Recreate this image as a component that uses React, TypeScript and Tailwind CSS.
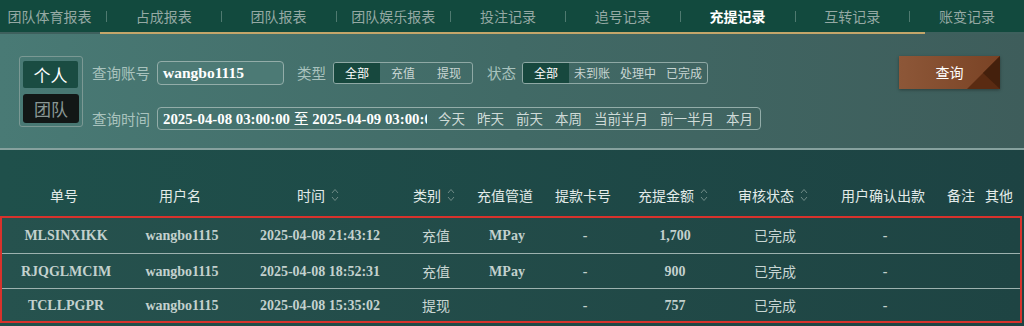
import React from "react";

const tabs = ["团队体育报表", "占成报表", "团队报表", "团队娱乐报表", "投注记录", "追号记录", "充提记录", "互转记录", "账变记录"];

// column widths for header and rows
const cols = [128, 104, 172, 60, 82, 74, 106, 94, 126, 30, 46];

const headers: { label: string; sort?: boolean }[] = [
  { label: "单号" },
  { label: "用户名" },
  { label: "时间", sort: true },
  { label: "类别", sort: true },
  { label: "充值管道" },
  { label: "提款卡号" },
  { label: "充提金额", sort: true },
  { label: "审核状态", sort: true },
  { label: "用户确认出款" },
  { label: "备注" },
  { label: "其他" },
];

const rows = [
  { id: "MLSINXIKK", user: "wangbo1115", time: "2025-04-08 21:43:12", type: "充值", pipe: "MPay", amount: "1,700", h: "h-[35px]" },
  { id: "RJQGLMCIM", user: "wangbo1115", time: "2025-04-08 18:52:31", type: "充值", pipe: "MPay", amount: "900", h: "h-[35px]" },
  { id: "TCLLPGPR", user: "wangbo1115", time: "2025-04-08 15:35:02", type: "提现", pipe: "", amount: "757", h: "h-[33px]" },
];

const cjk = "font-['Noto_Sans_CJK_SC',sans-serif]";
const serif = "font-['Liberation_Serif','Noto_Sans_CJK_SC',serif]";

const SortIcon = () => (
  <svg width="8" height="16" viewBox="0 0 8 16" className="ml-[6px]">
    <path d="M1 6 L4 2.5 L7 6" fill="none" stroke="#6f8b87" strokeWidth="1" />
    <path d="M1 10 L4 13.5 L7 10" fill="none" stroke="#6f8b87" strokeWidth="1" />
  </svg>
);

const Segmented = ({ items }: { items: string[] }) => (
  <div className="flex h-[22px] rounded-[3px] border border-[#8fa9a5] overflow-hidden">
    {items.map((it, i) => (
      <div
        key={it}
        className={`w-[46px] flex items-center justify-center text-[12px] ${
          i === 0 ? "bg-[#17483e] text-white" : "text-[#c9d6d3]"
        }`}
      >
        {it}
      </div>
    ))}
  </div>
);

export default function App() {
  return (
    <div className={`w-[1024px] h-[326px] overflow-hidden bg-[#1d4543] ${cjk}`}>
      {/* tab bar */}
      <div className="bg-[#124a3e]">
        <div className="flex h-[32px] items-center">
          {tabs.map((t, i) => (
            <React.Fragment key={t}>
              {i > 0 && <div className="w-px h-[11px] bg-[#4f7a70]" />}
              <div
                className={`shrink-0 flex justify-center text-[14px] ${
                  i === 0 ? "w-[106px] pr-[7px]" : "w-[114px]"
                } ${t === "充提记录" ? "text-white font-bold" : "text-[#95a9a4]"}`}
              >
                {t}
              </div>
            </React.Fragment>
          ))}
        </div>
        <div className="h-[2px] bg-[#3e605d]">
          <div className="ml-[100px] w-[825px] h-[2px] bg-[#c4a66a]" />
        </div>
      </div>

      {/* filter panel */}
      <div className="h-[116px] flex items-start border-b-2 border-[#86a19e] bg-gradient-to-r from-[#497a75] via-[#416a66] to-[#3e5d5b]">
        <div className="ml-[19px] mt-[22px] w-[64px] h-[71px] border border-[#7b9994] rounded-[3px] pl-[3px] pt-[4px] flex flex-col gap-[6px]">
          <div className="w-[55px] h-[27px] bg-[#1a4c42] rounded-[2px] flex items-center justify-center text-[17px] text-white">个人</div>
          <div className="w-[56px] h-[29px] bg-[#121716] rounded-[3px] flex items-center justify-center text-[17px] text-[#8a9795]">团队</div>
        </div>

        <div className="ml-[9px] mt-[27px] flex flex-col gap-[22px]">
          <div className="flex items-center h-[24px]">
            <span className="w-[58px] text-[14.5px] text-[#a9c3be] whitespace-nowrap">查询账号</span>
            <div className={`ml-[7px] w-[127px] h-[24px] rounded-[4px] border border-[#93ada9] bg-[#4c7a75] flex items-center pl-[5px] text-[15.5px] font-bold text-white ${serif}`}>
              wangbo1115
            </div>
            <span className="ml-[13px] text-[14.5px] text-[#a9c3be]">类型</span>
            <div className="ml-[7px]">
              <Segmented items={["全部", "充值", "提现"]} />
            </div>
            <span className="ml-[14px] text-[14.5px] text-[#a9c3be]">状态</span>
            <div className="ml-[6px]">
              <Segmented items={["全部", "未到账", "处理中", "已完成"]} />
            </div>
          </div>
          <div className="flex items-center h-[23px]">
            <span className="w-[58px] text-[14.5px] text-[#a9c3be] whitespace-nowrap">查询时间</span>
            <div className="ml-[7px] w-[604px] h-[23px] rounded-[4px] border border-[#93ada9] flex items-center pl-[5px]">
              <div className={`w-[264px] overflow-hidden whitespace-nowrap text-[14.8px] font-bold text-white ${serif}`}>
                2025-04-08 03:00:00 <span className={`${cjk} font-normal`}>至</span> 2025-04-09 03:00:00
              </div>
              <div className="ml-[11px] flex gap-[12px] text-[13.5px] text-[#cfdad7] whitespace-nowrap">
                {["今天", "昨天", "前天", "本周", "当前半月", "前一半月", "本月"].map((d) => (
                  <span key={d}>{d}</span>
                ))}
              </div>
            </div>
          </div>
        </div>

        <div className="ml-auto mr-[24px] mt-[22px] relative w-[101px] h-[33px] bg-gradient-to-r from-[#8d5738] to-[#7a4325] shadow-[0_1px_3px_rgba(0,0,0,0.35)] flex items-center justify-center text-[14px] text-white">
          <svg className="absolute inset-0" width="101" height="33" viewBox="0 0 101 33">
            <polygon points="101,0 101,33 68,33" fill="#5a2b12" />
            <polygon points="101,0 101,33 84,17" fill="#44200c" />
          </svg>
          <span className="relative">查询</span>
        </div>
      </div>

      {/* table */}
      <div className="bg-gradient-to-r from-[#1f504b] to-[#1d4343] pt-[30px] h-[176px]">
        <div className="flex h-[30px] items-center text-[14px] text-[#e3ebe9]">
          {headers.map((h, i) => (
            <div key={h.label} style={{ width: cols[i] }} className="shrink-0 flex items-center justify-center whitespace-nowrap">
              {h.label}
              {h.sort && <SortIcon />}
            </div>
          ))}
        </div>
        <div className="mt-[6px] w-[1022px] border-2 border-[#d8322c]">
          {rows.map((r, ri) => {
            const cells = [r.id, r.user, r.time, r.type, r.pipe, "-", r.amount, "已完成", "-", "", ""];
            return (
              <div
                key={r.id}
                className={`flex items-center ${r.h} bg-gradient-to-r from-[#26524e] to-[#1e4443] ${
                  ri > 0 ? "border-t border-[#9db2af]" : ""
                }`}
              >
                {cells.map((c, i) => {
                  const isCjk = /[\u4e00-\u9fff]/.test(c);
                  return (
                    <div
                      key={i}
                      style={{ width: cols[i] }}
                      className={`shrink-0 text-center whitespace-nowrap ${
                        isCjk ? `text-[14px] text-[#c9d6d3] ${cjk}` : `text-[14px] font-bold text-[#c3d1ce] ${serif}`
                      }`}
                    >
                      {c}
                    </div>
                  );
                })}
              </div>
            );
          })}
        </div>
      </div>
    </div>
  );
}
